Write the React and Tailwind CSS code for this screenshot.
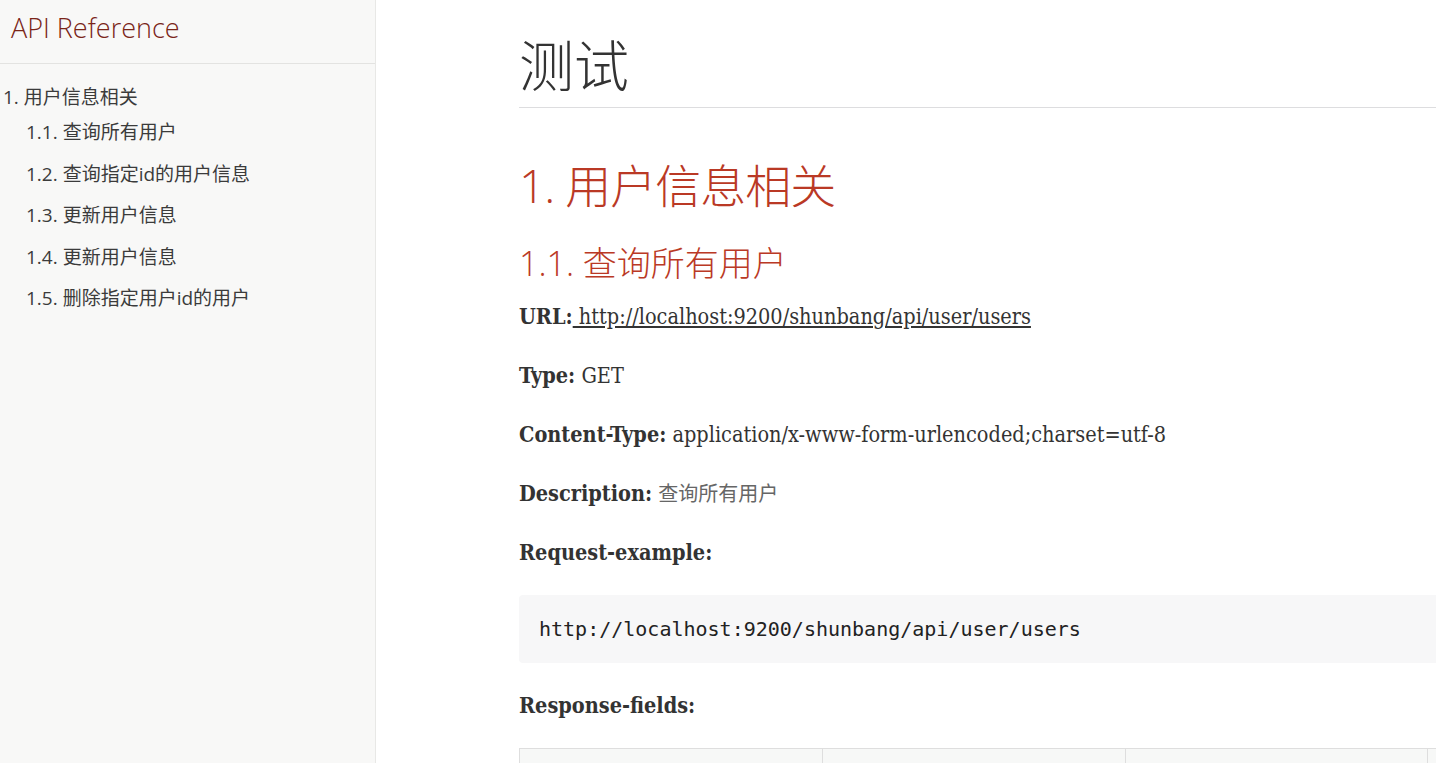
const tocItems = [
  "1.1. 查询所有用户",
  "1.2. 查询指定id的用户信息",
  "1.3. 更新用户信息",
  "1.4. 更新用户信息",
  "1.5. 删除指定用户id的用户",
];

const sans = "font-['Open_Sans','Noto_Sans_CJK_SC',sans-serif]";
const serif = "font-['DejaVu_Serif_Condensed','DejaVu_Serif','Noto_Sans_CJK_SC',serif]";

const Field = ({ label, children }) => (
  <p className={`${serif} text-[21.5px] leading-[34px] mb-[25px] text-[#333]`}>
    <strong className="font-bold">{label}</strong>
    {children}
  </p>
);

const App = () => {
  return (
    <div className="flex w-screen h-screen overflow-hidden bg-white">
      <aside className={`${sans} w-[376px] shrink-0 h-full bg-[#f8f8f7] border-r border-[#e8e8e6]`}>
        <div className="h-[64px] border-b border-[#e3e3e1] pl-[11px] pt-[9px]">
          <h1 className="text-[27px] font-light leading-[38px] text-[#7a2518]">API Reference</h1>
        </div>
        <div className="pl-[3px] pt-[19px] text-[19px] text-[#3b3b3b]">
          <div className="leading-[28px]">1. 用户信息相关</div>
          <ul className="pl-[23px] mt-[7px] flex flex-col gap-[13.5px]">
            {tocItems.map(item => (
              <li key={item} className="leading-[28px]">{item}</li>
            ))}
          </ul>
        </div>
      </aside>

      <main className="flex-1 min-w-0 pl-[143px]">
        <div className="w-[1212px]">
          <h1 className={`${sans} font-light text-[55px] leading-[66px] mt-[32px] pb-[9px] border-b border-[#dddddf] text-[#333]`}>
            测试
          </h1>
          <h2 className={`${sans} font-light text-[46px] leading-[55px] mt-[50px] text-[#ba3925] tracking-[-1px]`}>
            1. 用户信息相关
          </h2>
          <h3 className={`${sans} font-light text-[34px] leading-[41px] mt-[30px] text-[#ba3925]`}>
            1.1. 查询所有用户
          </h3>
          <div className="mt-[16px]">
            <Field label="URL:">
              <a className="underline text-[#333]"> http://localhost:9200/shunbang/api/user/users</a>
            </Field>
            <Field label="Type:"> GET</Field>
            <Field label="Content-Type:"> application/x-www-form-urlencoded;charset=utf-8</Field>
            <Field label="Description:">
              {" "}
              <span className="text-[#666] text-[20px]">查询所有用户</span>
            </Field>
            <Field label="Request-example:" />
          </div>
          <pre className="h-[68px] bg-[#f7f7f8] rounded-[4px] px-[20px] flex items-center font-['DejaVu_Sans_Mono',monospace] text-[20px] text-[#222]">
            http://localhost:9200/shunbang/api/user/users
          </pre>
          <div className="mt-[26px]">
            <Field label="Response-fields:" />
          </div>
          <table className="w-[1212px] border-collapse border border-[#dedede]">
            <thead>
              <tr>
                {[0, 1, 2, 3].map(i => (
                  <th key={i} className="w-[303px] h-[44px] bg-[#f7f8f7] border border-[#dedede]"></th>
                ))}
              </tr>
            </thead>
          </table>
        </div>
      </main>
    </div>
  );
};

export default App;
